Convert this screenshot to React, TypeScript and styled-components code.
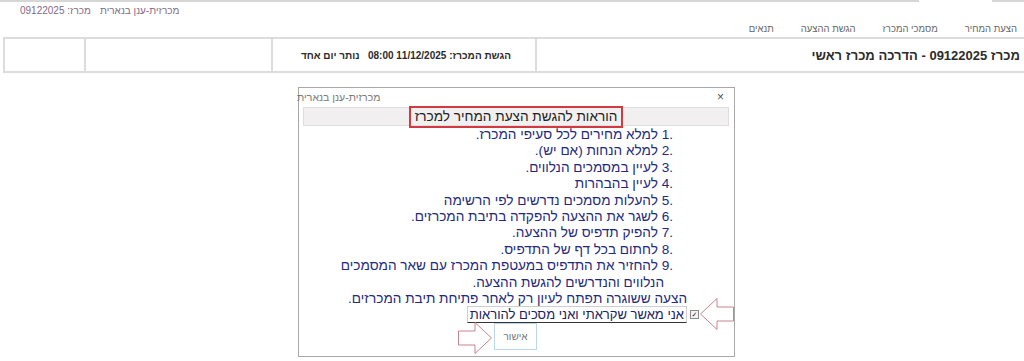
import * as React from "react";
import styled, { createGlobalStyle } from "styled-components";

const GlobalStyle = createGlobalStyle`
  html, body {
    margin: 0;
    padding: 0;
    background: #fff;
    overflow: hidden;
  }
  body {
    font-family: "Liberation Sans", Arial, "DejaVu Sans", sans-serif;
  }
`;

const steps = [
  "למלא מחירים לכל סעיפי המכרז.",
  "למלא הנחות (אם יש).",
  "לעיין במסמכים הנלווים.",
  "לעיין בהבהרות",
  "להעלות מסמכים נדרשים לפי הרשימה",
  "לשגר את ההצעה להפקדה בתיבת המכרזים.",
  "להפיק תדפיס של ההצעה.",
  "לחתום בכל דף של התדפיס.",
  "להחזיר את התדפיס במעטפת המכרז עם שאר המסמכים",
];

const tabs = ["הצעת המחיר", "מסמכי המכרז", "הגשת ההצעה", "תנאים"];

const Arrow = ({ dir }: { dir: "left" | "right" }) => (
  <svg width="34" height="32" viewBox="0 0 34 32">
    <polygon
      points="0.5,16 17,0.5 17,9 33.5,9 33.5,23 17,23 17,31.5"
      fill="#fff"
      stroke="#c9838d"
      strokeWidth="1"
      transform={dir === "right" ? "translate(34 0) scale(-1 1)" : undefined}
    />
  </svg>
);

export default function App() {
  return (
    <Page dir="rtl">
      <GlobalStyle />
      <TopRule>
        <RuleSeg $w="32px" />
        <RuleGap />
        <RuleSeg />
      </TopRule>
      <TopInfo>
        <span>מכרזית-ענן בנארית</span>
        <span>מכרז: 09122025</span>
      </TopInfo>
      <Tabs>
        {tabs.map((t) => (
          <Tab key={t}>{t}</Tab>
        ))}
      </Tabs>
      <InfoTable>
        <Cell $w="491px" $bold $size="13px" $pad="6px">
          מכרז 09122025 - הדרכה מכרז ראשי
        </Cell>
        <Cell $w="264px" $bold $size="10px" $pad="24px">
          הגשת המכרז: 11/12/2025 08:00&nbsp;&nbsp; נותר יום אחד
        </Cell>
        <Cell $w="187px" />
        <Cell $w="81px" />
      </InfoTable>

      <Dialog dir="ltr">
        <TitleBar>
          <Title>מכרזית-ענן בנארית</Title>
          <Close>×</Close>
        </TitleBar>
        <Band>
          <Heading dir="rtl">הוראות להגשת הצעת המחיר למכרז</Heading>
        </Band>
        <Body dir="rtl">
          {steps.map((s, i) => (
            <Line key={i} $pad="61px">
              <Num dir="ltr">{i + 1}.</Num> {s}
            </Line>
          ))}
          <Line $pad="70px">הנלווים והנדרשים להגשת ההצעה.</Line>
          <Line $pad="47px">הצעה ששוגרה תפתח לעיון רק לאחר פתיחת תיבת המכרזים.</Line>
          <AgreeRow>
            <Check>✓</Check>
            <AgreeLabel>אני מאשר שקראתי ואני מסכים להוראות</AgreeLabel>
          </AgreeRow>
          <ButtonRow>
            <Confirm>אישור</Confirm>
          </ButtonRow>
        </Body>
        <ArrowMark $left="401px" $top="210px">
          <Arrow dir="left" />
        </ArrowMark>
        <ArrowMark $left="159px" $top="234px">
          <Arrow dir="right" />
        </ArrowMark>
      </Dialog>
    </Page>
  );
}

const Page = styled.div`
  width: 1024px;
  height: 361px;
  overflow: hidden;
`;

const TopRule = styled.div`
  display: flex;
  height: 2px;
`;

const RuleSeg = styled.div<{ $w?: string }>`
  background: #d6d6d6;
  flex: ${(p) => (p.$w ? `0 0 ${p.$w}` : "1")};
`;

const RuleGap = styled.div`
  flex: 0 0 73px;
`;

const TopInfo = styled.div`
  display: flex;
  justify-content: flex-end;
  gap: 9px;
  padding-top: 2px;
  margin-left: 20px;
  height: 14px;
  font-size: 10px;
  line-height: 14px;
  color: #7f6a88;
  white-space: nowrap;
`;

const Tabs = styled.nav`
  display: flex;
  gap: 27px;
  padding: 4px 7px 0 0;
  height: 14px;
`;

const Tab = styled.span`
  font-size: 9.5px;
  line-height: 14px;
  color: #666;
  white-space: nowrap;
`;

const InfoTable = styled.div`
  display: flex;
  margin: 1px -2px 0 0;
  width: 1023px;
  height: 36px;
  box-sizing: border-box;
  border-top: 2px solid #dcdcdc;
  border-bottom: 2px solid #dcdcdc;
`;

const Cell = styled.div<{ $w: string; $bold?: boolean; $size?: string; $pad?: string }>`
  flex: 0 0 ${(p) => p.$w};
  box-sizing: border-box;
  display: flex;
  align-items: center;
  padding-right: ${(p) => p.$pad || "4px"};
  border-left: 2px solid #dcdcdc;
  font-size: ${(p) => p.$size || "12px"};
  font-weight: ${(p) => (p.$bold ? 700 : 400)};
  color: #2b2b2b;
  white-space: nowrap;
`;

const Dialog = styled.div`
  position: relative;
  width: 437px;
  height: 270px;
  box-sizing: border-box;
  margin: 14px 289px 0 auto;
  border: 1px solid #a9a9a9;
  background: #fff;
`;

const TitleBar = styled.div`
  display: flex;
  justify-content: space-between;
  align-items: center;
  height: 17px;
  padding: 0 10px 0 0;
`;

const Title = styled.span`
  font-size: 10.5px;
  color: #7a7a7a;
  margin-left: -2px;
  white-space: nowrap;
`;

const Close = styled.span`
  font-size: 12px;
  color: #555;
`;

const Band = styled.div`
  display: flex;
  justify-content: center;
  height: 19px;
  margin: 2px 5px 0 4px;
  background: #f1efef;
  border: 1px solid #dedede;
  box-sizing: border-box;
`;

const Heading = styled.span`
  margin-top: -2px;
  height: 22px;
  padding: 0 4px;
  box-sizing: border-box;
  border: 2px solid #d23a42;
  font-size: 13.6px;
  line-height: 18px;
  color: #222;
  white-space: nowrap;
`;

const Body = styled.div`
  display: flex;
  flex-direction: column;
  padding-top: 1px;
`;

const Line = styled.div<{ $pad: string }>`
  padding-right: ${(p) => p.$pad};
  font-size: 13.6px;
  line-height: 16.4px;
  color: #232a7c;
  white-space: nowrap;
`;

const Num = styled.span`
  unicode-bidi: isolate;
`;

const AgreeRow = styled.div`
  display: flex;
  align-items: center;
  gap: 3px;
  padding-right: 35px;
  margin-top: -1px;
`;

const Check = styled.span`
  width: 7px;
  height: 7px;
  border: 1px solid #8a8a8a;
  background: #f3f3f3;
  font-size: 7px;
  line-height: 7px;
  text-align: center;
  color: #222;
`;

const AgreeLabel = styled.span`
  height: 15px;
  padding: 0 2px;
  border: 1px solid #cfcfcf;
  border-bottom: 1px solid #333;
  background: #fff;
  font-size: 13px;
  line-height: 15px;
  color: #1b2160;
  white-space: nowrap;
`;

const ButtonRow = styled.div`
  display: flex;
  justify-content: center;
  padding: 0 2px 0 0;
`;

const Confirm = styled.button`
  width: 43px;
  height: 27px;
  border: 1px solid #bcd6ec;
  background: #fff;
  font-family: inherit;
  font-size: 10px;
  color: #777;
  padding: 0;
`;

const ArrowMark = styled.div<{ $left: string; $top: string }>`
  position: absolute;
  left: ${(p) => p.$left};
  top: ${(p) => p.$top};
  width: 34px;
  height: 32px;
  line-height: 0;
`;
